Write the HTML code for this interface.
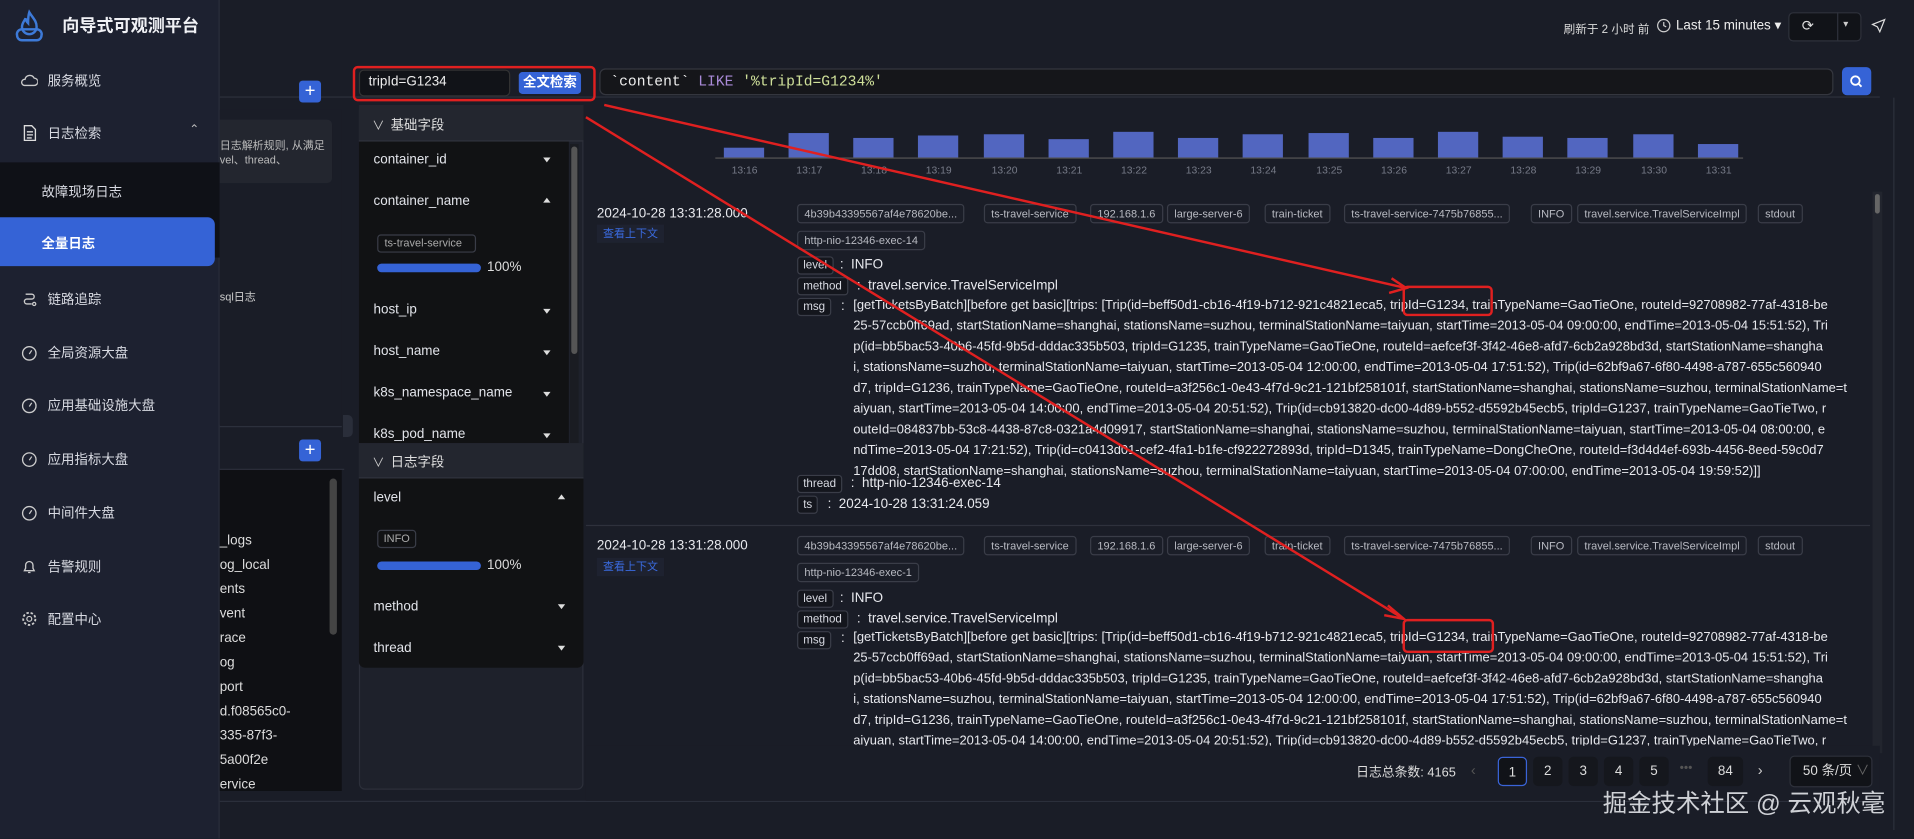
<!DOCTYPE html>
<html><head><meta charset="utf-8">
<style>
*{box-sizing:border-box;margin:0;padding:0}
html,body{width:1914px;height:838px;overflow:hidden;background:#1a1d27}
#w{position:absolute;left:0;top:0;width:1568px;height:687px;transform:scale(1.22066);transform-origin:0 0;background:#1a1d27;font-family:"Liberation Sans","Noto Sans CJK SC",sans-serif;color:#e4e6ee;font-size:11px}
.a{position:absolute}
.side{left:0;top:0;width:180px;height:687px;background:#1d2130;border-right:1px solid #2a2e3b}
.mi{position:absolute;left:17px;font-size:11px;color:#d8dae2;display:flex;align-items:center;gap:8px}
.mi svg{width:14px;height:14px}
.tag{position:absolute;height:16px;border:1px solid #3a3d48;border-radius:3px;font-size:9px;color:#b8bac2;padding:0 5px;line-height:14px;white-space:nowrap;background:#1b1e28}
.k{position:absolute;height:15px;border:1px solid #3a3d48;border-radius:3px;font-size:9.5px;color:#d8dae2;padding:0 4px;line-height:13px;background:#14161d}
.v{position:absolute;font-size:11px;color:#e8e9ee;white-space:nowrap}
.ln{position:absolute;left:699px;font-size:10.6px;color:#e8e9ee;white-space:nowrap;width:830px;overflow:hidden}
.fld{position:absolute;left:306px;font-size:11px;color:#e2e4ea}
.car{position:absolute;width:0;height:0;border-left:3.5px solid transparent;border-right:3.5px solid transparent}
.dn{border-top:4px solid #ddd}.up{border-bottom:4px solid #ddd}
.bar{position:absolute;background:#5266c0;width:33px}
.tl{position:absolute;top:134px;font-size:8.5px;color:#777b88;width:30px;text-align:center}
.pg{position:absolute;top:620px;width:24px;height:24px;border-radius:4px;background:#15171d;font-size:11px;text-align:center;line-height:24px;color:#ddd}
</style></head><body><div id="w">

<div class="a side"></div>
<svg class="a" style="left:9px;top:7px" width="30" height="30" viewBox="0 0 30 30"><path d="M15 3c3 5 6 7 6 12a6 6 0 0 1-12 0c0-3 2-5 3-7 0 2 1 3 2 4 0-3 0-6 1-9z" fill="none" stroke="#3d7ad8" stroke-width="2"/><path d="M5 22a4 4 0 0 1 4-5h12a4 4 0 0 1 4 5 4 4 0 0 1-4 4H9a4 4 0 0 1-4-4z" fill="none" stroke="#3d7ad8" stroke-width="2"/></svg>
<div class="a" style="left:51px;top:11px;font-size:14px;font-weight:bold;color:#f0f1f5">向导式可观测平台</div>
<div class="mi" style="top:58px"><svg viewBox="0 0 14 14"><path d="M3 11h8a3 3 0 0 0 0-6 4 4 0 0 0-7.5 1A2.5 2.5 0 0 0 3 11z" fill="none" stroke="#ccc" stroke-width="1.1"/></svg>服务概览</div>
<div class="mi" style="top:101px"><svg viewBox="0 0 14 14"><path d="M3 1h6l3 3v9H3z M5 6h5M5 8.5h5M5 11h4" fill="none" stroke="#ddd" stroke-width="1.1"/></svg>日志检索</div>
<div class="a" style="left:155px;top:101px;color:#bbb;font-size:10px">⌃</div>
<div class="a" style="left:0;top:133px;width:180px;height:78px;background:#0f1117"></div>
<div class="a" style="left:34px;top:149px;font-size:11px;color:#d8dae2">故障现场日志</div>
<div class="a" style="left:0;top:178px;width:176px;height:40px;background:#3563d6;border-radius:0 6px 6px 0"></div>
<div class="a" style="left:34px;top:191px;font-size:11px;color:#fff;font-weight:bold">全量日志</div>
<div class="mi" style="top:237px"><svg viewBox="0 0 14 14"><path d="M4 3h5a2 2 0 0 1 0 4H5a2 2 0 0 0 0 4h4" fill="none" stroke="#ccc" stroke-width="1.1"/><circle cx="11" cy="11" r="1.3" fill="none" stroke="#ccc"/></svg>链路追踪</div>
<div class="mi" style="top:281px"><svg viewBox="0 0 14 14"><circle cx="7" cy="7.5" r="5.5" fill="none" stroke="#ccc" stroke-width="1.1"/><path d="M7 8l2-3" stroke="#ccc"/></svg>全局资源大盘</div>
<div class="mi" style="top:324px"><svg viewBox="0 0 14 14"><circle cx="7" cy="7.5" r="5.5" fill="none" stroke="#ccc" stroke-width="1.1"/><path d="M7 8l2-3" stroke="#ccc"/></svg>应用基础设施大盘</div>
<div class="mi" style="top:368px"><svg viewBox="0 0 14 14"><circle cx="7" cy="7.5" r="5.5" fill="none" stroke="#ccc" stroke-width="1.1"/><path d="M7 8l2-3" stroke="#ccc"/></svg>应用指标大盘</div>
<div class="mi" style="top:412px"><svg viewBox="0 0 14 14"><circle cx="7" cy="7.5" r="5.5" fill="none" stroke="#ccc" stroke-width="1.1"/><path d="M7 8l2-3" stroke="#ccc"/></svg>中间件大盘</div>
<div class="mi" style="top:456px"><svg viewBox="0 0 14 14"><path d="M3 10.5h8l-1-2V6a3 3 0 0 0-6 0v2.5zM6 12h2" fill="none" stroke="#ccc" stroke-width="1.1"/></svg>告警规则</div>
<div class="mi" style="top:499px"><svg viewBox="0 0 14 14"><circle cx="7" cy="7" r="2" fill="none" stroke="#ccc"/><circle cx="7" cy="7" r="5" fill="none" stroke="#ccc" stroke-dasharray="2 1.5" stroke-width="1.5"/></svg>配置中心</div>

<div class="a" style="left:180px;top:79px;width:1360px;height:1px;background:#2c303c"></div>
<div class="a" style="left:1281px;top:16px;font-size:9.5px;color:#ddd">刷新于 2 小时 前</div>
<svg class="a" style="left:1357px;top:15px" width="12" height="12"><circle cx="6" cy="6" r="5" fill="none" stroke="#ccc"/><path d="M6 3v3l2 1" stroke="#ccc" fill="none"/></svg>
<div class="a" style="left:1373px;top:14px;font-size:11px;color:#eee">Last 15 minutes ▾</div>
<div class="a" style="left:1465px;top:10px;width:60px;height:24px;background:#111318;border:1px solid #2e313b;border-radius:4px"></div>
<div class="a" style="left:1505px;top:10px;width:1px;height:24px;background:#2e313b"></div>
<div class="a" style="left:1476px;top:14px;font-size:12px;color:#ddd">⟳</div>
<div class="a" style="left:1510px;top:15px;font-size:8px;color:#ccc">▾</div>
<svg class="a" style="left:1533px;top:15px" width="12" height="12"><path d="M11 1L1 5l4 2 2 4z" fill="none" stroke="#ddd"/></svg>

<div class="a" style="left:180px;top:90px;width:100px;height:258px;background:#1a1d27"></div>
<div class="a" style="left:180px;top:98px;width:92px;height:52px;background:#23262f;border-radius:0 4px 4px 0"></div>
<div class="a" style="left:180px;top:113px;font-size:9px;color:#bbb;line-height:12px">日志解析规则, 从满足<br>vel、thread、</div>
<div class="a" style="left:245px;top:66px;width:18px;height:18px;background:#3563d6;border-radius:3px;color:#fff;text-align:center;font-size:15px;line-height:17px">+</div>
<div class="a" style="left:180px;top:236px;font-size:9px;color:#ccc">sql日志</div>
<div class="a" style="left:180px;top:349px;width:100px;height:1px;background:#2c303c"></div>
<div class="a" style="left:245px;top:360px;width:18px;height:18px;background:#3563d6;border-radius:3px;color:#fff;text-align:center;font-size:15px;line-height:17px">+</div>
<div class="a" style="left:180px;top:384px;width:102px;height:1px;background:#2c303c"></div>
<div class="a" style="left:180px;top:385px;width:100px;height:263px;background:#0f1014"></div>
<div class="a" style="left:270px;top:392px;width:6px;height:128px;background:#444;border-radius:3px"></div>
<div class="a" style="left:180px;top:433px;font-size:11px;color:#ddd;line-height:20px">_logs<br>og_local<br>ents<br>vent<br>race<br>og<br>port<br>d.f08565c0-<br>335-87f3-<br>5a00f2e<br>ervice</div>
<div class="a" style="left:281px;top:340px;width:8px;height:18px;background:#2a2e3a;border-radius:0 4px 4px 0"></div>
<div class="a" style="left:180px;top:656px;width:1360px;height:1px;background:#2c303c"></div>

<div class="a" style="left:294px;top:57px;width:124px;height:22px;background:#111318;border:1px solid #333;border-radius:4px"></div>
<div class="a" style="left:302px;top:61px;font-size:11px;color:#eee">tripId=G1234</div>
<div class="a" style="left:425px;top:59px;width:51px;height:18px;background:#3563d6;border-radius:3px;color:#fff;font-size:11px;text-align:center;line-height:18px;font-weight:bold">全文检索</div>
<div class="a" style="left:491px;top:56px;width:1011px;height:22px;background:#15161a;border:1px solid #34363e;border-radius:5px"></div>
<div class="a" style="left:500px;top:60px;font-family:'Liberation Mono',monospace;font-size:12px;color:#eee;white-space:pre">`content` <span style="color:#a98ad8">LIKE</span> <span style="color:#cfe09a">'%tripId=G1234%'</span></div>
<div class="a" style="left:1509px;top:55px;width:24px;height:23px;background:#3563d6;border-radius:4px"></div>
<svg class="a" style="left:1515px;top:61px" width="12" height="12"><circle cx="5" cy="5" r="3.5" fill="none" stroke="#fff" stroke-width="1.5"/><path d="M7.5 7.5L10 10" stroke="#fff" stroke-width="1.5"/></svg>

<div class="a" style="left:294px;top:86px;width:184px;height:561px;background:#1e212b;border:1px solid #2c2f3a;border-radius:5px"></div>
<div class="a" style="left:294px;top:86px;width:184px;height:30px;background:#23262f;border-bottom:1px solid #30333d"></div>
<div class="a" style="left:305px;top:94px;font-size:10px;color:#ccc">∨</div>
<div class="a" style="left:320px;top:94px;font-size:11px;color:#ddd">基础字段</div>
<div class="a" style="left:294px;top:116px;width:172px;height:247px;background:#111214"></div>
<div class="a" style="left:467px;top:118px;width:7px;height:245px;background:#1a1c22"></div>
<div class="a" style="left:468px;top:120px;width:5px;height:170px;background:#555;border-radius:3px"></div>
<div class="fld" style="top:125px">container_id</div><div class="car dn" style="left:445px;top:129px"></div>
<div class="fld" style="top:159px">container_name</div><div class="car up" style="left:445px;top:162px"></div>
<div class="a" style="left:309px;top:192px;width:81px;height:15px;border:1px solid #3a3d48;border-radius:3px;font-size:9px;color:#aaa;line-height:13px;padding-left:5px">ts-travel-service</div>
<div class="a" style="left:309px;top:216px;width:85px;height:7px;background:#3563d6;border-radius:4px"></div>
<div class="a" style="left:399px;top:213px;font-size:11px;color:#ddd">100%</div>
<div class="fld" style="top:248px">host_ip</div><div class="car dn" style="left:445px;top:253px"></div>
<div class="fld" style="top:282px">host_name</div><div class="car dn" style="left:445px;top:287px"></div>
<div class="fld" style="top:316px">k8s_namespace_name</div><div class="car dn" style="left:445px;top:321px"></div>
<div class="fld" style="top:350px">k8s_pod_name</div><div class="car dn" style="left:445px;top:355px"></div>
<div class="a" style="left:294px;top:363px;width:184px;height:29px;background:#23262f;border-bottom:1px solid #30333d"></div>
<div class="a" style="left:305px;top:370px;font-size:10px;color:#ccc">∨</div>
<div class="a" style="left:320px;top:370px;font-size:11px;color:#ddd">日志字段</div>
<div class="a" style="left:294px;top:392px;width:184px;height:155px;background:#111214;border-radius:0 0 5px 5px"></div>
<div class="fld" style="top:402px">level</div><div class="car up" style="left:457px;top:405px"></div>
<div class="a" style="left:309px;top:434px;width:32px;height:15px;border:1px solid #3a3d48;border-radius:3px;font-size:9px;color:#aaa;line-height:13px;text-align:center">INFO</div>
<div class="a" style="left:309px;top:460px;width:85px;height:7px;background:#3563d6;border-radius:4px"></div>
<div class="a" style="left:399px;top:457px;font-size:11px;color:#ddd">100%</div>
<div class="fld" style="top:491px">method</div><div class="car dn" style="left:457px;top:495px"></div>
<div class="fld" style="top:525px">thread</div><div class="car dn" style="left:457px;top:529px"></div>

<div class="a" style="left:586px;top:129px;width:842px;height:1px;background:#555"></div>
<div class="bar" style="left:593px;top:121px;height:8px"></div>
<div class="bar" style="left:646px;top:109px;height:20px"></div>
<div class="bar" style="left:699px;top:113px;height:16px"></div>
<div class="bar" style="left:752px;top:111px;height:18px"></div>
<div class="bar" style="left:806px;top:110px;height:19px"></div>
<div class="bar" style="left:859px;top:114px;height:15px"></div>
<div class="bar" style="left:912px;top:108px;height:21px"></div>
<div class="bar" style="left:965px;top:113px;height:16px"></div>
<div class="bar" style="left:1018px;top:110px;height:19px"></div>
<div class="bar" style="left:1072px;top:109px;height:20px"></div>
<div class="bar" style="left:1125px;top:113px;height:16px"></div>
<div class="bar" style="left:1178px;top:108px;height:21px"></div>
<div class="bar" style="left:1231px;top:112px;height:17px"></div>
<div class="bar" style="left:1284px;top:113px;height:16px"></div>
<div class="bar" style="left:1338px;top:110px;height:19px"></div>
<div class="bar" style="left:1391px;top:118px;height:11px"></div>
<div class="tl" style="left:595px">13:16</div><div class="tl" style="left:648px">13:17</div><div class="tl" style="left:701px">13:18</div><div class="tl" style="left:754px">13:19</div><div class="tl" style="left:808px">13:20</div><div class="tl" style="left:861px">13:21</div><div class="tl" style="left:914px">13:22</div><div class="tl" style="left:967px">13:23</div><div class="tl" style="left:1020px">13:24</div><div class="tl" style="left:1074px">13:25</div><div class="tl" style="left:1127px">13:26</div><div class="tl" style="left:1180px">13:27</div><div class="tl" style="left:1233px">13:28</div><div class="tl" style="left:1286px">13:29</div><div class="tl" style="left:1340px">13:30</div><div class="tl" style="left:1393px">13:31</div>

<div class="a" style="left:1534px;top:157px;width:8px;height:460px;background:#22252e"></div>
<div class="a" style="left:1536px;top:159px;width:4px;height:16px;background:#666;border-radius:2px"></div>
<div class="a" style="left:1551px;top:80px;width:1px;height:600px;background:#2c303c"></div>

<div class="v" style="left:489px;top:169px">2024-10-28 13:31:28.000</div>
<div class="a" style="left:489px;top:184px;width:55px;height:15px;background:#1e2230;color:#3a6be0;font-size:9px;line-height:15px;padding-left:5px">查看上下文</div>
<div class="tag" style="left:653px;top:167px">4b39b43395567af4e78620be...</div>
<div class="tag" style="left:806px;top:167px">ts-travel-service</div>
<div class="tag" style="left:893px;top:167px">192.168.1.6</div>
<div class="tag" style="left:956px;top:167px">large-server-6</div>
<div class="tag" style="left:1036px;top:167px">train-ticket</div>
<div class="tag" style="left:1101px;top:167px">ts-travel-service-7475b76855...</div>
<div class="tag" style="left:1254px;top:167px">INFO</div>
<div class="tag" style="left:1292px;top:167px">travel.service.TravelServiceImpl</div>
<div class="tag" style="left:1440px;top:167px">stdout</div>
<div class="tag" style="left:653px;top:189px">http-nio-12346-exec-14</div>
<div class="k" style="left:653px;top:210px">level</div><div class="v" style="left:688px;top:211px">: &nbsp;INFO</div>
<div class="k" style="left:653px;top:227px">method</div><div class="v" style="left:702px;top:228px">: &nbsp;travel.service.TravelServiceImpl</div>
<div class="k" style="left:653px;top:244px">msg</div><div class="v" style="left:689px;top:245px">:</div>
<div class="ln" style="top:244px">[getTicketsByBatch][before get basic][trips: [Trip(id=beff50d1-cb16-4f19-b712-921c4821eca5, tripId=G1234, trainTypeName=GaoTieOne, routeId=92708982-77af-4318-be</div>
<div class="ln" style="top:261px">25-57ccb0ff69ad, startStationName=shanghai, stationsName=suzhou, terminalStationName=taiyuan, startTime=2013-05-04 09:00:00, endTime=2013-05-04 15:51:52), Tri</div>
<div class="ln" style="top:278px">p(id=bb5bac53-40b6-45fd-9b5d-dddac335b503, tripId=G1235, trainTypeName=GaoTieOne, routeId=aefcef3f-3f42-46e8-afd7-6cb2a928bd3d, startStationName=shangha</div>
<div class="ln" style="top:295px">i, stationsName=suzhou, terminalStationName=taiyuan, startTime=2013-05-04 12:00:00, endTime=2013-05-04 17:51:52), Trip(id=62bf9a67-6f80-4498-a787-655c560940</div>
<div class="ln" style="top:312px">d7, tripId=G1236, trainTypeName=GaoTieOne, routeId=a3f256c1-0e43-4f7d-9c21-121bf258101f, startStationName=shanghai, stationsName=suzhou, terminalStationName=t</div>
<div class="ln" style="top:329px">aiyuan, startTime=2013-05-04 14:00:00, endTime=2013-05-04 20:51:52), Trip(id=cb913820-dc00-4d89-b552-d5592b45ecb5, tripId=G1237, trainTypeName=GaoTieTwo, r</div>
<div class="ln" style="top:346px">outeId=084837bb-53c8-4438-87c8-0321a4d09917, startStationName=shanghai, stationsName=suzhou, terminalStationName=taiyuan, startTime=2013-05-04 08:00:00, e</div>
<div class="ln" style="top:363px">ndTime=2013-05-04 17:21:52), Trip(id=c0413d01-cef2-4fa1-b1fe-cf922272893d, tripId=D1345, trainTypeName=DongCheOne, routeId=f3d4d4ef-693b-4456-8eed-59c0d7</div>
<div class="ln" style="top:380px">17dd08, startStationName=shanghai, stationsName=suzhou, terminalStationName=taiyuan, startTime=2013-05-04 07:00:00, endTime=2013-05-04 19:59:52)]]</div>
<div class="k" style="left:653px;top:389px">thread</div><div class="v" style="left:697px;top:390px">: &nbsp;http-nio-12346-exec-14</div>
<div class="k" style="left:653px;top:406px">ts</div><div class="v" style="left:678px;top:407px">: &nbsp;2024-10-28 13:31:24.059</div>
<div class="a" style="left:480px;top:430px;width:1052px;height:1px;background:#2e313c"></div>

<div class="v" style="left:489px;top:441px">2024-10-28 13:31:28.000</div>
<div class="a" style="left:489px;top:457px;width:55px;height:15px;background:#1e2230;color:#3a6be0;font-size:9px;line-height:15px;padding-left:5px">查看上下文</div>
<div class="tag" style="left:653px;top:439px">4b39b43395567af4e78620be...</div>
<div class="tag" style="left:806px;top:439px">ts-travel-service</div>
<div class="tag" style="left:893px;top:439px">192.168.1.6</div>
<div class="tag" style="left:956px;top:439px">large-server-6</div>
<div class="tag" style="left:1036px;top:439px">train-ticket</div>
<div class="tag" style="left:1101px;top:439px">ts-travel-service-7475b76855...</div>
<div class="tag" style="left:1254px;top:439px">INFO</div>
<div class="tag" style="left:1292px;top:439px">travel.service.TravelServiceImpl</div>
<div class="tag" style="left:1440px;top:439px">stdout</div>
<div class="tag" style="left:653px;top:461px">http-nio-12346-exec-1</div>
<div class="k" style="left:653px;top:483px">level</div><div class="v" style="left:688px;top:484px">: &nbsp;INFO</div>
<div class="k" style="left:653px;top:500px">method</div><div class="v" style="left:702px;top:501px">: &nbsp;travel.service.TravelServiceImpl</div>
<div class="k" style="left:653px;top:517px">msg</div><div class="v" style="left:689px;top:517px">:</div>
<div class="ln" style="top:516px">[getTicketsByBatch][before get basic][trips: [Trip(id=beff50d1-cb16-4f19-b712-921c4821eca5, tripId=G1234, trainTypeName=GaoTieOne, routeId=92708982-77af-4318-be</div>
<div class="ln" style="top:533px">25-57ccb0ff69ad, startStationName=shanghai, stationsName=suzhou, terminalStationName=taiyuan, startTime=2013-05-04 09:00:00, endTime=2013-05-04 15:51:52), Tri</div>
<div class="ln" style="top:550px">p(id=bb5bac53-40b6-45fd-9b5d-dddac335b503, tripId=G1235, trainTypeName=GaoTieOne, routeId=aefcef3f-3f42-46e8-afd7-6cb2a928bd3d, startStationName=shangha</div>
<div class="ln" style="top:567px">i, stationsName=suzhou, terminalStationName=taiyuan, startTime=2013-05-04 12:00:00, endTime=2013-05-04 17:51:52), Trip(id=62bf9a67-6f80-4498-a787-655c560940</div>
<div class="ln" style="top:584px">d7, tripId=G1236, trainTypeName=GaoTieOne, routeId=a3f256c1-0e43-4f7d-9c21-121bf258101f, startStationName=shanghai, stationsName=suzhou, terminalStationName=t</div>
<div class="ln" style="top:601px;height:10px">aiyuan, startTime=2013-05-04 14:00:00, endTime=2013-05-04 20:51:52), Trip(id=cb913820-dc00-4d89-b552-d5592b45ecb5, tripId=G1237, trainTypeName=GaoTieTwo, r</div>

<div class="a" style="left:480px;top:611px;width:1060px;height:45px;background:#1a1d27"></div>
<div class="a" style="left:1111px;top:625px;font-size:10.5px;color:#ddd">日志总条数: 4165</div>
<div class="a" style="left:1205px;top:624px;color:#555;font-size:12px">‹</div>
<div class="pg" style="left:1227px;border:1px solid #3a64d8;background:#111318">1</div>
<div class="pg" style="left:1256px">2</div><div class="pg" style="left:1285px">3</div><div class="pg" style="left:1314px">4</div><div class="pg" style="left:1343px">5</div>
<div class="a" style="left:1376px;top:624px;color:#555;font-size:10px">•••</div>
<div class="pg" style="left:1399px;width:29px">84</div>
<div class="a" style="left:1440px;top:624px;color:#ccc;font-size:12px">›</div>
<div class="a" style="left:1466px;top:619px;width:68px;height:26px;background:#111318;border:1px solid #2e313b;border-radius:4px;font-size:11px;color:#ddd;line-height:24px;padding-left:10px">50 条/页 <span style="color:#666">∨</span></div>
<div class="a" style="left:1313px;top:642px;font-size:20px;color:#cfd1d6;white-space:nowrap">掘金技术社区 @ 云观秋毫</div>

<svg class="a" style="left:0;top:0" width="1568" height="687">
<rect x="290" y="55" width="197" height="27" rx="3" fill="none" stroke="#e02020" stroke-width="2"/>
<rect x="1150" y="235" width="72" height="23" rx="3" fill="none" stroke="#e02020" stroke-width="2"/>
<rect x="1150" y="508" width="73" height="26" rx="3" fill="none" stroke="#e02020" stroke-width="2"/>
<path d="M495 86L1152 236M480 96L1150 507" stroke="#e02020" stroke-width="2" fill="none"/>
<path d="M1140 228L1152 236L1138 240M1137 496L1150 507L1134 504" stroke="#e02020" stroke-width="2" fill="none"/>
</svg>
</div></body></html>
